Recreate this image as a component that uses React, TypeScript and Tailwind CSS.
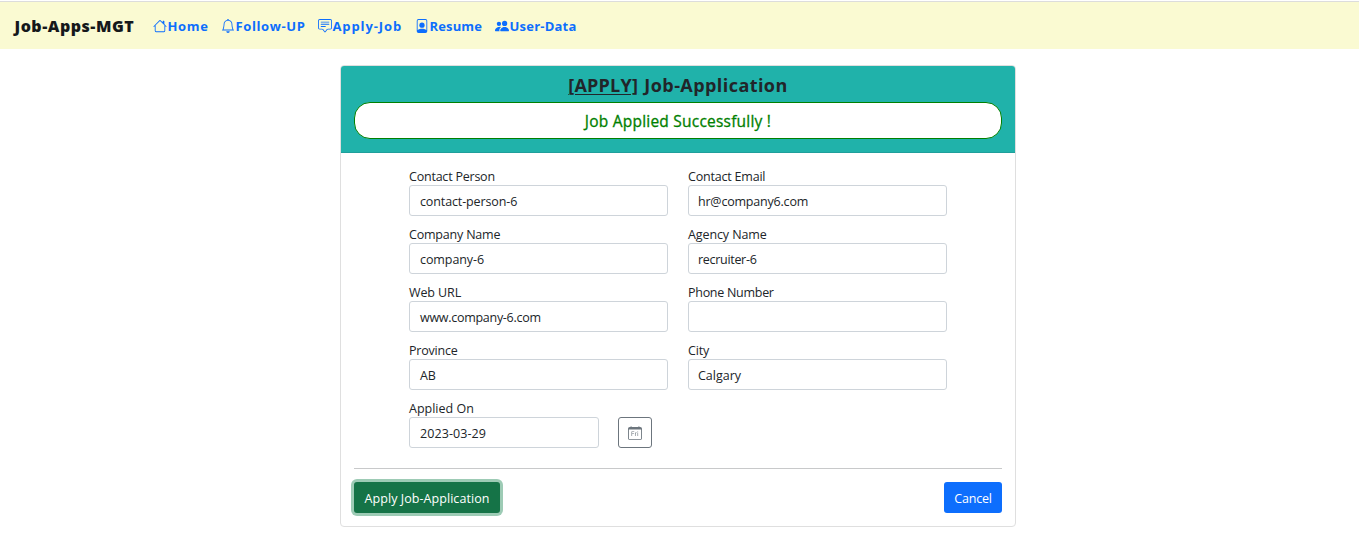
import type { ReactNode } from 'react';
import { BsBell, BsCalendarDay, BsChatSquareText, BsFilePerson, BsHouse, BsPeopleFill } from 'react-icons/bs';

function NavItem({ icon, className, label }: { icon: ReactNode; className: string; label: string }) {
  return (
    <a href="#" className={`flex h-5 items-center whitespace-nowrap text-[13px] font-bold text-[#0d6efd] ${className}`}>
      <span className="shrink-0 text-[14px]">{icon}</span>
      <span className="pt-px pl-[0.5px]">{label}</span>
    </a>
  );
}

type FieldProps = {
  label: string;
  value: string;
  width?: string;
  labelTracking?: string;
  valueTracking?: string;
  padding?: string;
};

function Field({
  label,
  value,
  width = 'w-[259px]',
  labelTracking = 'tracking-[-0.2px]',
  valueTracking = 'tracking-[-0.08px]',
  padding = 'px-[10px]',
}: FieldProps) {
  return (
    <div className="h-[58px]">
      <div className={`flex h-[17px] items-center whitespace-nowrap pt-[2px] text-[12.5px] ${labelTracking}`}>{label}</div>
      <div
        className={`flex h-[31px] items-center rounded-[3px] border border-[#ced4da] bg-white pt-[3px] text-[12.5px] ${width} ${padding} ${valueTracking}`}
      >
        {value}
      </div>
    </div>
  );
}

export default function App() {
  return (
    <div className="min-h-[558px] bg-white pt-px font-['Open_Sans','Noto_Sans',sans-serif] text-[#212529]">
      <nav className="flex h-[48px] items-center border-t border-[#dcdcdc] bg-[#fafad2] pt-px pl-[14px]">
        <span className="w-[139px] whitespace-nowrap pl-[0.5px] text-[16px] font-extrabold tracking-[0.52px] text-[#15181b]">Job-Apps-MGT</span>
        <NavItem className="w-[68px] tracking-[0.65px]" icon={<BsHouse />} label="Home" />
        <NavItem className="w-[97px] tracking-[0.62px]" icon={<BsBell />} label="Follow-UP" />
        <NavItem className="w-[97px] tracking-[0.9px]" icon={<BsChatSquareText />} label="Apply-Job" />
        <NavItem className="w-[80px] tracking-[0.15px]" icon={<BsFilePerson />} label="Resume" />
        <NavItem className="w-[90px] tracking-[0.22px]" icon={<BsPeopleFill />} label="User-Data" />
      </nav>
      <main className="mt-4 ml-[340px] flex h-[462px] w-[676px] flex-col rounded-[4px] border border-[#dfdfdf] bg-white">
        <header className="flex h-[87px] flex-col items-center rounded-t-[3px] border-b border-[#1f9f9b] bg-[#20b2aa] px-[13px] pt-[8px]">
          <h1 className="h-[22px] whitespace-nowrap text-[18px] leading-[22px] font-bold tracking-[0.43px]">
            <u className="mr-[1.2px] tracking-[0.2px] decoration-1 underline-offset-2">[APPLY]</u> Job-Application
          </h1>
          <div className="mt-[6px] flex h-[37px] w-full items-center justify-center rounded-[16px] border border-[green] bg-white pt-[2px] text-[15.5px] font-medium tracking-[0.22px] text-[green] [-webkit-text-stroke:0.3px_green]">
            Job Applied Successfully !
          </div>
        </header>
        <section className="ml-[68px] grid grid-cols-[259px_259px] gap-x-[20px] pt-[15px]">
          <Field label="Contact Person" value="contact-person-6" labelTracking="tracking-[-0.22px]" valueTracking="tracking-[-0.12px]" />
          <Field label="Contact Email" value="hr@company6.com" padding="px-[9px]" valueTracking="tracking-[-0.2px]" />
          <Field label="Company Name" value="company-6" />
          <Field label="Agency Name" value="recruiter-6" padding="px-[9px]" labelTracking="tracking-[-0.1px]" valueTracking="tracking-[-0.3px]" />
          <Field label="Web URL" value="www.company-6.com" labelTracking="tracking-[-0.1px]" valueTracking="tracking-[-0.28px]" />
          <Field label="Phone Number" value="" labelTracking="tracking-[-0.28px]" />
          <Field label="Province" value="AB" />
          <Field label="City" value="Calgary" padding="px-[9px]" valueTracking="tracking-normal" />
          <div className="flex">
            <Field
              label="Applied On"
              value="2023-03-29"
              width="w-[190px]"
              labelTracking="tracking-normal"
              valueTracking="tracking-[0.08px]"
            />
            <button className="mt-[17px] ml-[19px] flex h-[31px] w-[34px] items-center justify-center rounded-[3px] border border-[#6c757d] text-[14px] text-[#6c757d]">
              <BsCalendarDay />
            </button>
          </div>
        </section>
        <footer className="mx-[13px] mt-[10px] flex justify-between border-t border-[#c8c9ca] pt-[13px] text-[12.5px] font-medium text-white">
          <button className="h-[31px] w-[146px] whitespace-nowrap rounded-[3px] bg-[#157347] pt-[3px] tracking-[0.06px] shadow-[0_0_0_3px_#9dcbb5]">
            Apply Job-Application
          </button>
          <button className="h-[31px] w-[58px] rounded-[3px] bg-[#0d6efd] pt-[3px] tracking-[-0.2px]">Cancel</button>
        </footer>
      </main>
    </div>
  );
}
